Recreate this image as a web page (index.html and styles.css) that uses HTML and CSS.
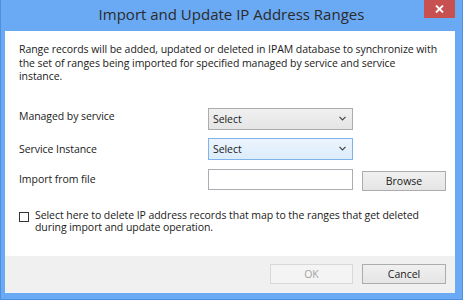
FILE: index.html
```html
<!doctype html>
<html lang="en">
  <head>
    <meta charset="UTF-8" />
    <title>Import and Update IP Address Ranges</title>
    <link rel="stylesheet" href="styles.css">
  </head>
  <body>
    <div class="window">
      <div class="titlebar">
        <span class="title">Import and Update IP Address Ranges</span>
        <button class="close" title="Close">
          <svg width="9" height="8" viewBox="0 0 9 8">
            <path d="M1 0.5 L8 7.5 M8 0.5 L1 7.5" stroke="#fff" stroke-width="1.8" fill="none" />
          </svg>
        </button>
      </div>

      <div class="client">
        <div class="content">
          <p class="intro">
            Range records will be added, updated or deleted in IPAM database to synchronize with<br>
            the set of ranges being imported for specified managed by service and service<br>
            instance.
          </p>

          <div class="form">
            <label class="lbl lbl-first">Managed by service</label>
            <div class="combo">
              <span>Select</span>
              <svg width="7" height="5" viewBox="0 0 7 5"><polyline points="0.5,0.8 3.5,3.8 6.5,0.8" stroke="#444" stroke-width="1.2" fill="none" /></svg>
            </div>
            <div></div>

            <label class="lbl">Service Instance</label>
            <div class="combo focused">
              <span>Select</span>
              <svg width="7" height="5" viewBox="0 0 7 5"><polyline points="0.5,0.8 3.5,3.8 6.5,0.8" stroke="#444" stroke-width="1.2" fill="none" /></svg>
            </div>
            <div></div>

            <label class="lbl">Import from file</label>
            <input type="text" class="file-box" />
            <button class="btn browse">Browse</button>
          </div>

          <div class="check-row">
            <span class="checkbox"></span>
            <span class="check-text">Select here to delete IP address records that map to the ranges that get deleted during import and update operation.</span>
          </div>
        </div>

        <div class="footer">
          <button class="btn" disabled>OK</button>
          <button class="btn">Cancel</button>
        </div>
      </div>
    </div>
  </body>
</html>
```
FILE: styles.css
```css
html,
body {
  margin: 0;
  padding: 0;
}
body {
  font-family: "Open Sans", "Noto Sans", sans-serif;
  font-size: 10.5px;
  letter-spacing: -0.06px;
  color: #1a1a1a;
}
.window {
  width: 463px;
  height: 300px;
  box-sizing: border-box;
  background-color: #6aa9f3;
  border: 1px solid #4f8ee0;
  border-top: none;
  padding: 0 7px 6px 4px;
  display: flex;
  flex-direction: column;
}
.titlebar {
  position: relative;
  height: 31px;
  flex: none;
  text-align: center;
  margin-left: -4px;
  margin-right: -7px;
}
.title {
  font-size: 15px;
  letter-spacing: 0;
  line-height: 28px;
  color: #2b2b2b;
}
.close {
  position: absolute;
  top: 0;
  right: 7px;
  width: 31px;
  height: 18px;
  border: none;
  padding: 0;
  background-color: #c75050;
  display: flex;
  align-items: center;
  justify-content: center;
}
.client {
  flex: 1;
  display: flex;
  flex-direction: column;
  background-color: #fff;
}
.content {
  flex: 1;
  padding: 12px 6px 0 14px;
}
.intro {
  margin: 0;
  line-height: 13.5px;
  white-space: nowrap;
}
.form {
  display: grid;
  grid-template-columns: 180px 145px 84px;
  column-gap: 9px;
  row-gap: 8px;
  align-items: center;
  margin-top: 24px;
}
.lbl {
  line-height: 14px;
}
.lbl-first {
  margin-top: -6px;
}
.combo {
  height: 22px;
  box-sizing: border-box;
  border: 1px solid #acacac;
  background: linear-gradient(#f0f0f0, #e5e5e5);
  display: flex;
  align-items: center;
  justify-content: space-between;
  padding: 0 6px 0 4px;
}
.combo.focused {
  border-color: #7eb4ea;
  background: linear-gradient(#ecf4fc, #dcecfc);
}
.file-box {
  height: 21px;
  box-sizing: border-box;
  border: 1px solid #abadb3;
  margin: 0;
  padding: 0 4px;
  font: inherit;
}
.btn {
  font: inherit;
  color: #1a1a1a;
  width: 84px;
  height: 20px;
  box-sizing: border-box;
  border: 1px solid #acacac;
  background: linear-gradient(#f0f0f0, #e5e5e5);
  padding: 0;
  line-height: 16px;
}
.btn:disabled {
  color: #a3a3a3;
  border-color: #d9d9d9;
  background: #f4f4f4;
  width: 83px;
}
.browse {
  align-self: start;
  margin-top: 3px;
}
.check-row {
  display: flex;
  gap: 6px;
  margin-top: 18px;
  padding-right: 10px;
}
.checkbox {
  flex: none;
  width: 10px;
  height: 10px;
  border: 1px solid #333;
  box-sizing: border-box;
  margin-top: 3px;
}
.check-text {
  line-height: 12.7px;
}
.footer {
  height: 37px;
  flex: none;
  box-sizing: border-box;
  background-color: #f0f0f0;
  display: flex;
  justify-content: flex-end;
  align-items: flex-start;
  gap: 9px;
  padding: 8px 9px 0 0;
}
```
